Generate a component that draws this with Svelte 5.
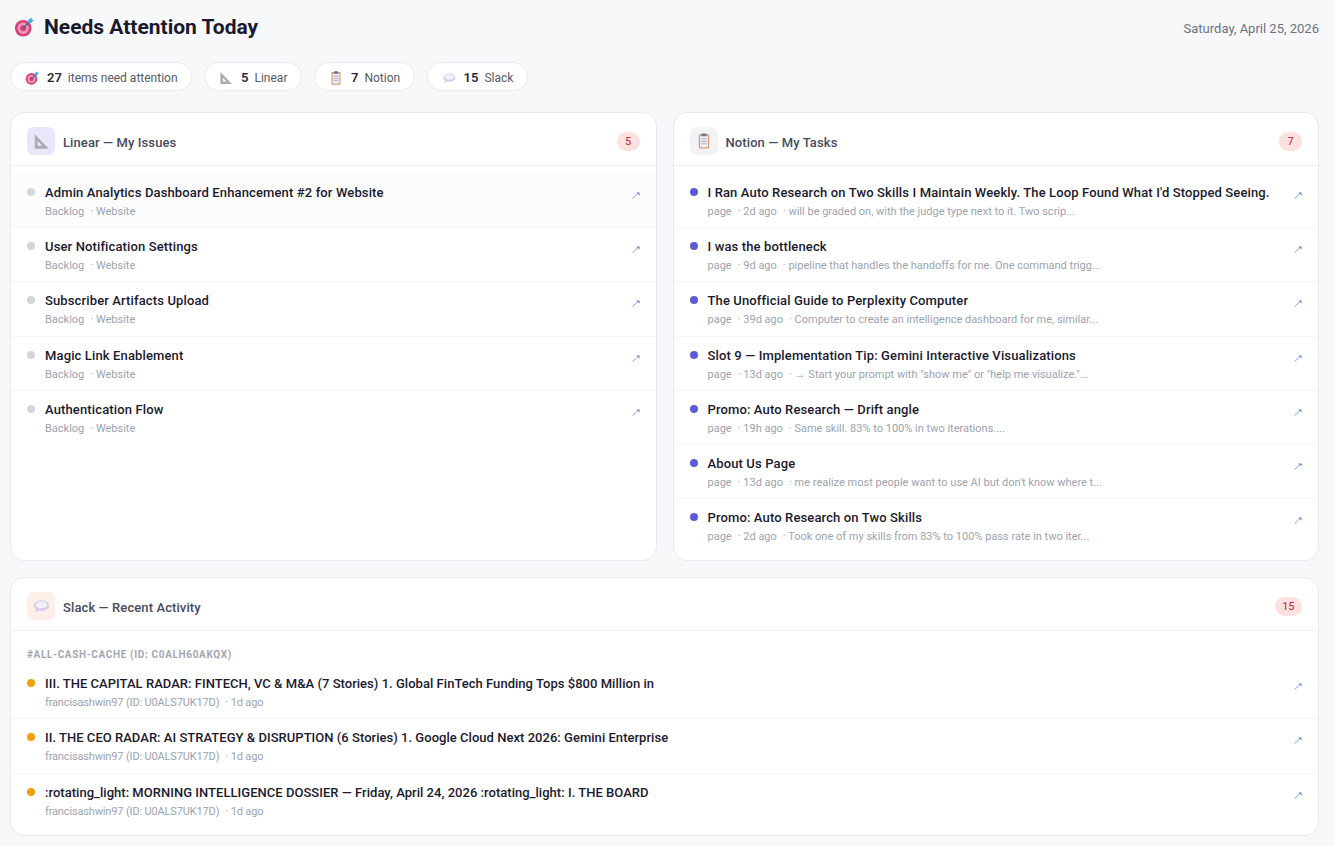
<script>
  const linear = [
    { title: "Admin Analytics Dashboard Enhancement #2 for Website" },
    { title: "User Notification Settings" },
    { title: "Subscriber Artifacts Upload" },
    { title: "Magic Link Enablement" },
    { title: "Authentication Flow" }
  ];
  const notion = [
    { title: "I Ran Auto Research on Two Skills I Maintain Weekly. The Loop Found What I'd Stopped Seeing.", age: "2d ago", text: "will be graded on, with the judge type next to it. Two scrip..." },
    { title: "I was the bottleneck", age: "9d ago", text: "pipeline that handles the handoffs for me. One command trigg..." },
    { title: "The Unofficial Guide to Perplexity Computer", age: "39d ago", text: "Computer to create an intelligence dashboard for me, similar..." },
    { title: "Slot 9 — Implementation Tip: Gemini Interactive Visualizations", age: "13d ago", text: "→ Start your prompt with \"show me\" or \"help me visualize.\"..." },
    { title: "Promo: Auto Research — Drift angle", age: "19h ago", text: "Same skill. 83% to 100% in two iterations...." },
    { title: "About Us Page", age: "13d ago", text: "me realize most people want to use AI but don't know where t..." },
    { title: "Promo: Auto Research on Two Skills", age: "2d ago", text: "Took one of my skills from 83% to 100% pass rate in two iter..." }
  ];
  const slack = [
    { title: "III. THE CAPITAL RADAR: FINTECH, VC & M&A (7 Stories) 1. Global FinTech Funding Tops $800 Million in" },
    { title: "II. THE CEO RADAR: AI STRATEGY & DISRUPTION (6 Stories) 1. Google Cloud Next 2026: Gemini Enterprise" },
    { title: ":rotating_light: MORNING INTELLIGENCE DOSSIER — Friday, April 24, 2026 :rotating_light: I. THE BOARD" }
  ];
</script>

{#snippet target(size)}
  <svg width={size} height={size} viewBox="0 0 24 24">
    <circle cx="11" cy="13.5" r="10" fill="#d8407a" />
    <circle cx="11" cy="13.5" r="6.8" fill="#f29ab8" />
    <circle cx="11" cy="13.5" r="3.6" fill="#d8407a" />
    <path d="M11 13.5 L20 4.5" stroke="#3d6f96" stroke-width="2" />
    <path d="M17 4 L21 0.5 L21.5 3 L24 3.5 L20 7.5 L17 7 Z" fill="#45a9ee" />
  </svg>
{/snippet}

{#snippet ruler(size)}
  <svg width={size} height={size} viewBox="0 0 20 20">
    <path fill-rule="evenodd" d="M2 1.5 L18.5 18.5 H2 Z M5.5 9.5 V15 H10.8 Z" fill="#aeaaba" />
  </svg>
{/snippet}

{#snippet clipboard(size)}
  <svg width={size} height={size} viewBox="0 0 20 20">
    <rect x="3.5" y="1.5" width="13" height="18" rx="1" fill="#cf9a78" />
    <rect x="5" y="3.5" width="10" height="14.5" fill="#eceaf2" />
    <rect x="7" y="0.5" width="6" height="3.5" rx="1" fill="#77747f" />
    <path d="M6.5 7.5 H13.5 M6.5 10.5 H13.5 M6.5 13.5 H13.5" stroke="#b3b0c2" stroke-width="1.3" />
  </svg>
{/snippet}

{#snippet bubble(size)}
  <svg width={size} height={size} viewBox="0 0 20 20">
    <ellipse cx="10.5" cy="9.5" rx="8.5" ry="6" fill="#d6cceb" />
    <ellipse cx="10.5" cy="8.6" rx="6.3" ry="4" fill="#f3effb" />
    <path d="M5 12.5 L3 17 L9 14.8 Z" fill="#d6cceb" />
  </svg>
{/snippet}

{#snippet arrow()}
  <svg class="arrow" width="8" height="7" viewBox="0 0 8 7">
    <path d="M0.5 6.7 L6.5 1" fill="none" stroke="#7f9fd8" stroke-width="1" />
    <path d="M4.2 0.4 H7.6 V3.6 Z" fill="#6f8fd0" />
  </svg>
{/snippet}

{#snippet row(item, dot, meta)}
  <div class="row">
    <span class="dot {dot}"></span>
    <div class="body">
      <div class="title">{item.title}</div>
      <div class="meta">{@render meta(item)}</div>
    </div>
    {@render arrow()}
  </div>
{/snippet}

{#snippet linearMeta()}
  <span>Backlog</span><span class="sep">· Website</span>
{/snippet}

{#snippet notionMeta(item)}
  <span>page</span><span class="sep">· {item.age}</span><span class="sep">· {item.text}</span>
{/snippet}

{#snippet slackMeta()}
  <span>francisashwin97 (ID: U0ALS7UK17D)</span><span class="sep">· 1d ago</span>
{/snippet}

<div class="page">
  <header>
    <h1>{@render target(20)}<span>Needs Attention Today</span></h1>
    <div class="date">Saturday, April 25, 2026</div>
  </header>

  <div class="pills">
    <div class="pill">{@render target(14)}<b>27</b><span>items need attention</span></div>
    <div class="pill">{@render ruler(14)}<b>5</b><span>Linear</span></div>
    <div class="pill">{@render clipboard(14)}<b>7</b><span>Notion</span></div>
    <div class="pill">{@render bubble(14)}<b>15</b><span>Slack</span></div>
  </div>

  <div class="columns">
    <section class="card">
      <div class="head">
        <div class="icon purple">{@render ruler(17)}</div>
        <h2>Linear — My Issues</h2>
        <span class="count">{linear.length}</span>
      </div>
      <div class="list">
        {#each linear as item, i}
          <div class:hover={i === 0}>{@render row(item, "grey", linearMeta)}</div>
        {/each}
      </div>
    </section>

    <section class="card">
      <div class="head">
        <div class="icon neutral">{@render clipboard(16)}</div>
        <h2>Notion — My Tasks</h2>
        <span class="count">{notion.length}</span>
      </div>
      <div class="list">
        {#each notion as item}
          {@render row(item, "indigo", notionMeta)}
        {/each}
      </div>
    </section>
  </div>

  <section class="card slack">
    <div class="head">
      <div class="icon peach">{@render bubble(18)}</div>
      <h2>Slack — Recent Activity</h2>
      <span class="count">15</span>
    </div>
    <div class="list">
      <div class="channel">#all-cash-cache (ID: C0ALH60AKQX)</div>
      {#each slack as item}
        {@render row(item, "amber", slackMeta)}
      {/each}
    </div>
  </section>
</div>

<style>
  :global(body) {
    background: #f7f8fa;
  }

  .page {
    padding: 0 16px 10px 10px;
    font-family: Roboto, sans-serif;
    color: #1a1a2e;
  }

  header {
    display: flex;
    justify-content: space-between;
    align-items: center;
    height: 54px;
  }

  h1 {
    display: flex;
    align-items: center;
    gap: 10px;
    margin: 0 0 0 4px;
    font-size: 21px;
    font-weight: 700;
  }

  .date {
    font-size: 13px;
    color: #6b7280;
    margin-top: 2px;
  }

  .pills {
    display: flex;
    gap: 12px;
    margin-top: 8px;
    margin-bottom: 21px;
  }

  .pill {
    display: flex;
    align-items: center;
    box-sizing: border-box;
    height: 29px;
    padding: 2px 13.5px 0 14px;
    background: #fff;
    border: 1px solid #e8eaef;
    border-radius: 15px;
    font-size: 12px;
    color: #555a68;
  }

  .pill b {
    margin: 0 6px 0 8px;
    font-size: 13px;
    font-weight: 600;
    color: #2a2a3e;
  }

  .columns {
    display: grid;
    grid-template-columns: 1fr 1fr;
    gap: 16px;
    margin-bottom: 16px;
  }

  .columns .card {
    box-sizing: border-box;
    height: 449px;
  }

  .card {
    background: #fff;
    border: 1px solid #e8eaef;
    border-radius: 14px;
    overflow: hidden;
  }

  .head {
    display: flex;
    align-items: center;
    gap: 8px;
    height: 53px;
    box-sizing: border-box;
    padding: 14px 16px 10px;
    border-bottom: 1px solid #eff0f3;
  }

  h2 {
    flex: 1;
    margin: 0;
    padding-top: 2px;
    font-size: 13px;
    font-weight: 500;
    letter-spacing: 0.1px;
    color: #474b5c;
  }

  .icon {
    display: flex;
    align-items: center;
    justify-content: center;
    width: 28px;
    height: 28px;
    border-radius: 7px;
  }

  .purple { background: #ebe7fb; }
  .neutral { background: #f3f3f5; }
  .peach { background: #fdeee8; }

  .count {
    box-sizing: border-box;
    min-width: 23px;
    height: 19px;
    padding: 0 7.5px;
    border-radius: 10px;
    background: #fde0e0;
    color: #c0283a;
    font-size: 11px;
    line-height: 19px;
    text-align: center;
  }

  .list {
    padding: 8px 0;
  }

  .slack .list {
    padding-bottom: 7px;
  }

  .row {
    display: flex;
    align-items: flex-start;
    height: 54.2px;
    box-sizing: border-box;
    padding: 10px 16px 0;
    border-bottom: 1px solid #f5f6f8;
  }

  .list > :last-child.row,
  .list > :last-child .row {
    border-bottom: 0;
  }

  .hover .row {
    background: #fcfcfd;
  }

  .dot {
    flex: none;
    width: 8px;
    height: 8px;
    margin-top: 4px;
    margin-right: 10px;
    border-radius: 50%;
  }

  .grey { background: #d4d5db; }
  .indigo { background: #5b5bd6; }
  .amber { background: #f59e0b; }

  .body {
    flex: 1;
    min-width: 0;
  }

  .title {
    font-size: 13px;
    font-weight: 500;
    letter-spacing: 0.13px;
    line-height: 18px;
    color: #1a1a2e;
  }

  .slack .title {
    letter-spacing: 0.03px;
  }

  .meta {
    margin-top: 3px;
    font-size: 11px;
    line-height: 14px;
    color: #9ca3af;
  }

  .slack .meta {
    letter-spacing: -0.15px;
  }

  .sep {
    margin-left: 6px;
  }

  .arrow {
    flex: none;
    margin-top: 8px;
  }

  .channel {
    padding: 10px 16px 5.2px;
    font-size: 10px;
    font-weight: 700;
    letter-spacing: 0.65px;
    text-transform: uppercase;
    color: #a3a6b1;
  }
</style>
